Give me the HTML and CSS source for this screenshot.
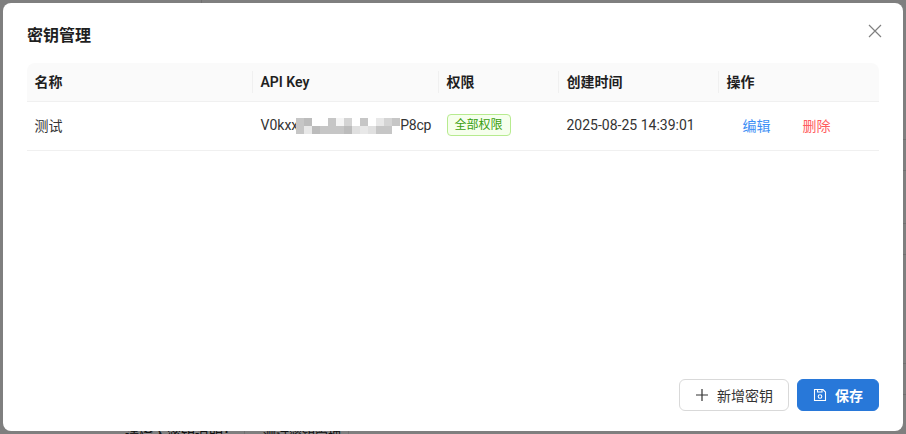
FILE: index.html
```html
<!DOCTYPE html>
<html lang="zh-CN">
<head>
<meta charset="utf-8">
<title>密钥管理</title>
<link rel="stylesheet" href="styles.css">
</head>
<body>
<div class="page-behind">
  <i class="vline v1"></i><i class="vline v2"></i><i class="vline v3"></i>
  <i class="hline h1"></i><i class="hline h2"></i><i class="hline h3"></i><i class="hline h4"></i><i class="hline h5"></i><i class="hline h6"></i>
  <span class="behind-a">请输入密钥说明：</span>
  <span class="behind-b">测试密钥管理</span>
</div>
<div class="overlay">
  <section class="modal">
    <header class="modal-head">
      <h1 class="modal-title">密钥管理</h1>
      <button class="close" aria-label="关闭">
        <svg width="14" height="14" viewBox="0 0 14 14"><path d="M1 1l12 12M13 1L1 13" fill="none" stroke="currentColor" stroke-width="1.2"/></svg>
      </button>
    </header>
    <div class="table">
      <div class="row row-head">
        <div class="cell c-name">名称</div>
        <div class="cell c-key">API Key</div>
        <div class="cell c-perm">权限</div>
        <div class="cell c-time">创建时间</div>
        <div class="cell c-op">操作</div>
      </div>
      <div class="row row-body">
        <div class="cell c-name">测试</div>
        <div class="cell c-key">
          <span class="key-head">V0kxx</span>
          <span class="mosaic" aria-hidden="true">
            <i class="m2"></i><i class="m1"></i><i class="m0"></i><i class="m0"></i><i class="m2"></i><i class="m5"></i><i class="m3"></i><i class="m0"></i><i class="m2"></i><i class="m0"></i><i class="m4"></i><i class="m3"></i><i class="m2"></i>
            <i class="m2"></i><i class="m4"></i><i class="m1"></i><i class="m2"></i><i class="m2"></i><i class="m2"></i><i class="m1"></i><i class="m6"></i><i class="m4"></i><i class="m6"></i><i class="m2"></i><i class="m2"></i><i class="m0"></i>
          </span>
          <span class="key-tail">P8cp</span>
        </div>
        <div class="cell c-perm"><span class="tag">全部权限</span></div>
        <div class="cell c-time">2025-08-25 14:39:01</div>
        <div class="cell c-op c-actions"><a class="link edit">编辑</a><a class="link del">删除</a></div>
      </div>
    </div>
    <footer class="modal-foot">
      <button class="btn btn-default">
        <svg width="14" height="14" viewBox="0 0 14 14"><path d="M7 1v12M1 7h12" fill="none" stroke="currentColor" stroke-width="1.2"/></svg>
        新增密钥
      </button>
      <button class="btn btn-primary">
        <svg width="14" height="14" viewBox="0 0 14 14" fill="none" stroke="currentColor" stroke-width="1.1"><path d="M1.5 1.5h8.5l2.5 2.5v8.5h-11z"/><path d="M4.5 1.5v2.5h4.5v-2.5"/><circle cx="7" cy="8.5" r="1.8"/></svg>
        保存
      </button>
    </footer>
  </section>
</div>
</body>
</html>
```
FILE: styles.css
```css
* { box-sizing: border-box; }
html, body { margin: 0; height: 100%; }
body {
  position: relative;
  overflow: hidden;
  width: 906px;
  height: 434px;
  font-family: Roboto, "Noto Sans CJK SC", sans-serif;
  font-size: 14px;
  color: #1f1f1f;
  background: #fff;
}
.page-behind {
  position: absolute;
  inset: 0;
  font-size: 14px;
  line-height: 20px;
  color: #222;
}
.behind-a, .behind-b { position: absolute; top: 425px; white-space: nowrap; }
.behind-a { left: 125px; }
.behind-b { left: 263px; font-size: 13px; }
.vline { position: absolute; width: 1px; background: #e0e0e0; }
.v1 { left: 201px; top: 0; height: 3px; }
.v2 { left: 244px; top: 431px; height: 3px; }
.v3 { left: 348px; top: 431px; height: 3px; }
.hline { position: absolute; left: 903px; width: 3px; height: 1px; background: #e0e0e0; }
.h1 { top: 139px; }
.h2 { top: 170px; }
.h3 { top: 223px; }
.h4 { top: 254px; }
.h5 { top: 363px; }
.h6 { top: 394px; }
.overlay {
  position: absolute;
  inset: 0;
  background: rgba(0, 0, 0, 0.5);
  padding: 3px;
}
.modal {
  width: 900px;
  height: 428px;
  background: #fff;
  border-radius: 8px;
  padding: 20px 24px;
  display: flex;
  flex-direction: column;
}
.modal-head {
  display: flex;
  justify-content: space-between;
  align-items: flex-start;
  height: 40px;
}
.modal-title {
  margin: 1px 0 0;
  font-size: 16px;
  line-height: 24px;
  font-weight: 600;
  color: #1f1f1f;
}
.close {
  border: 0;
  padding: 0;
  background: none;
  color: #808080;
  display: flex;
  margin: 1px -3px 0 0;
}
.table { display: flex; flex-direction: column; }
.row { display: grid; grid-template-columns: 226px 186px 120px 160px 160px; }
.row-head {
  height: 39px;
  background: #fafafa;
  border-radius: 8px 8px 0 0;
  border-bottom: 1px solid #f0f0f0;
  font-weight: 600;
  align-items: center;
}
.row-head .cell { position: relative; line-height: 22px; }
.row-head .cell + .cell::before {
  content: "";
  position: absolute;
  left: -1px;
  top: 0;
  height: 22px;
  width: 1px;
  background: #f0f0f0;
}
.row-body {
  height: 49px;
  border-bottom: 1px solid #f0f0f0;
  align-items: center;
  color: #333;
  padding-bottom: 2px;
}
.cell { padding: 0 8px; white-space: nowrap; margin-left: -0.5px; }
.c-key { display: flex; align-items: center; }
.key-head { flex: none; margin-right: -2px; }
.key-tail { flex: none; letter-spacing: -0.3px; }
.mosaic {
  display: grid;
  grid-template-columns: repeat(13, 8px);
  grid-auto-rows: 8px;
  width: 104px;
  flex: none;
  margin-top: 1px;
}
.mosaic i { display: block; }
.m0 { background: #fff; }
.m1 { background: #bcbcbc; }
.m2 { background: #c6c6c6; }
.m3 { background: #d4d4d4; }
.m4 { background: #e8e8e8; }
.m5 { background: #f5f5f5; }
.m6 { background: #e0e0e0; }
.tag {
  display: inline-block;
  height: 22px;
  line-height: 20px;
  padding: 0 7px;
  font-size: 12px;
  color: #389e0d;
  background: #f6ffed;
  border: 1px solid #b7eb8f;
  border-radius: 4px;
}
.c-actions { display: flex; padding-left: 24px; gap: 32px; }
.link { cursor: pointer; }
.edit { color: #3d8ff5; }
.del { color: #ff5c60; }
.modal-foot {
  margin-top: auto;
  display: flex;
  justify-content: flex-end;
  gap: 8px;
}
.btn {
  height: 32px;
  border-radius: 6px;
  font: inherit;
  display: flex;
  align-items: center;
  gap: 8px;
  padding: 0 15px;
}
.btn-default { background: #fff; border: 1px solid #d9d9d9; color: #333; }
.btn-primary { background: #2878d9; border: 1px solid #2878d9; color: #fff; font-weight: 600; }
```
